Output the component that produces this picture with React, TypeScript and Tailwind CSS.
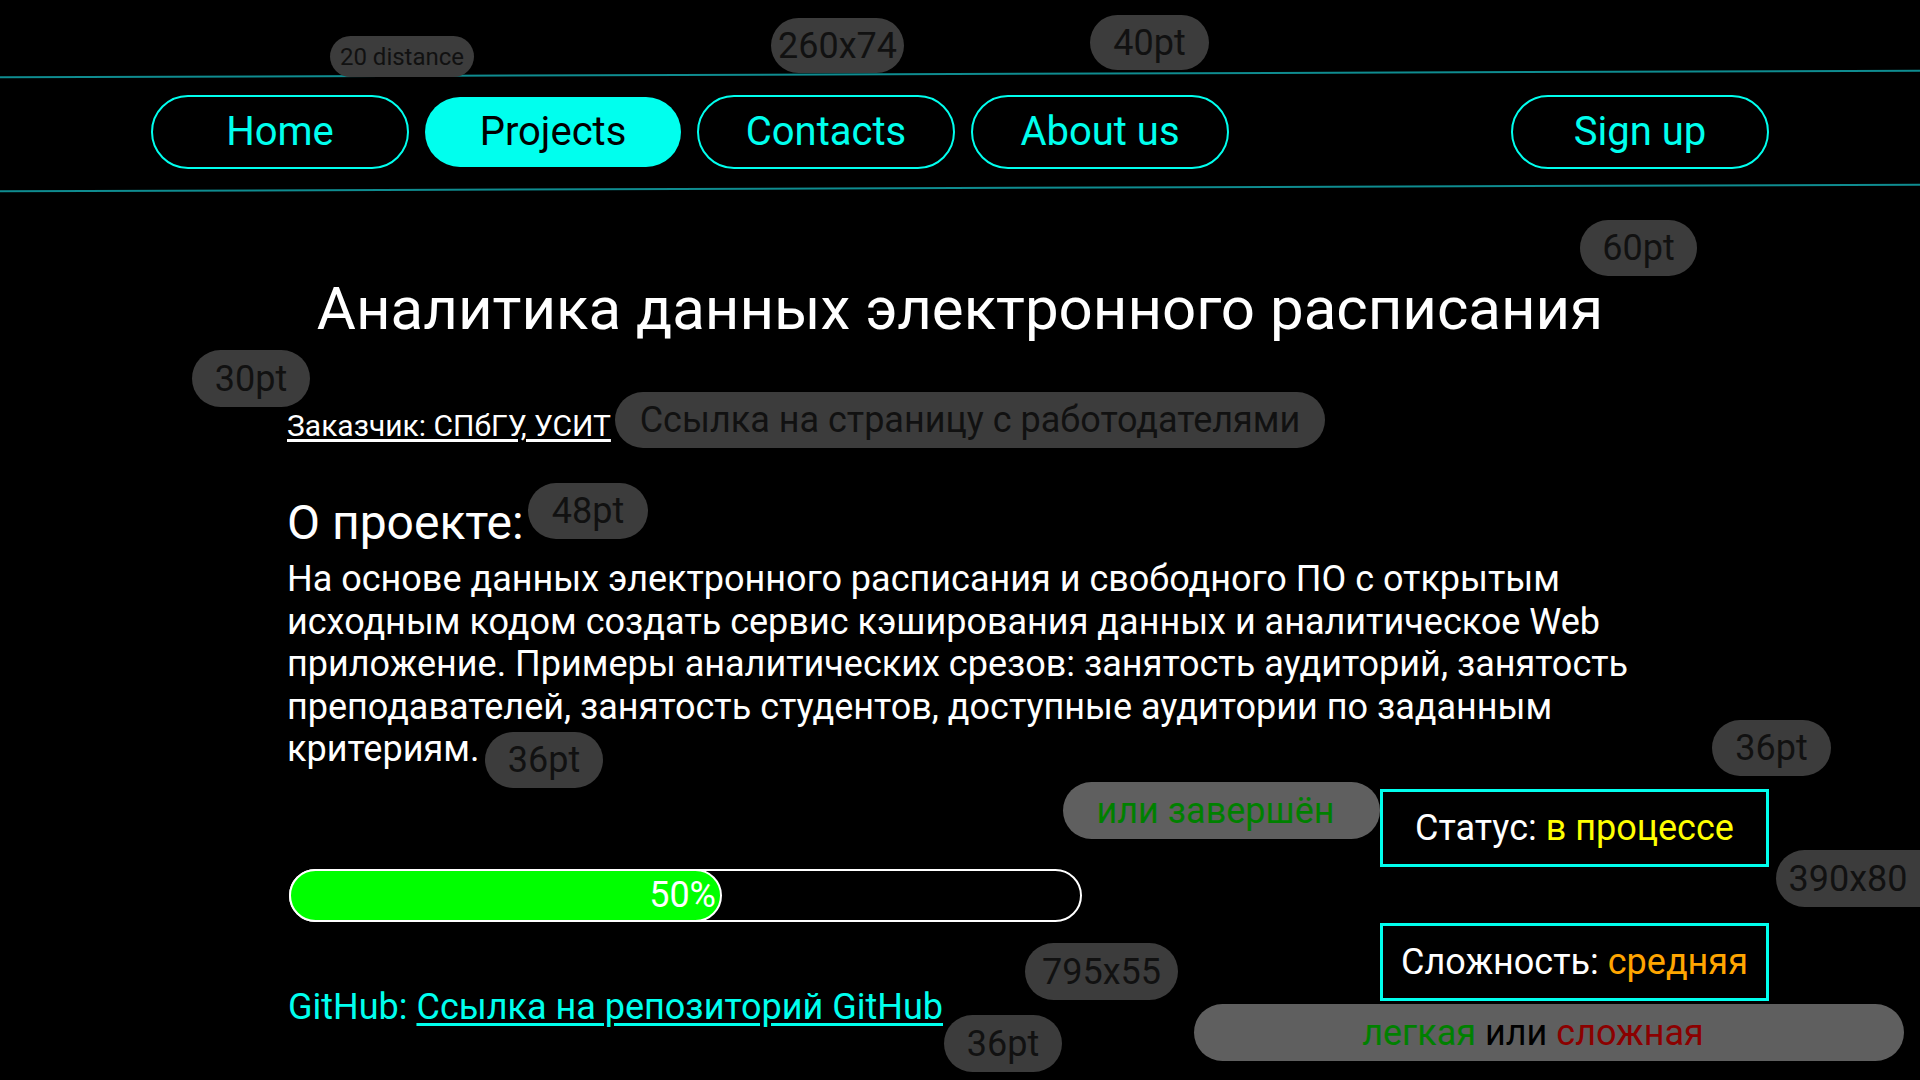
import type { ReactNode } from 'react'

// Annotation bubbles from the design handoff; they float over the layout.
// Size and colour come in through className so nothing conflicts.
function Note({ className, children }: { className: string; children: ReactNode }) {
  return (
    <div
      className={`absolute flex items-center justify-center rounded-full leading-none whitespace-nowrap ${className}`}
    >
      {children}
    </div>
  )
}

function NavButton({ label, active = false }: { label: string; active?: boolean }) {
  if (active) {
    return (
      <button className="flex h-[70px] w-[256px] items-center justify-center rounded-full bg-[#00ffee] text-[40px] text-black">
        {label}
      </button>
    )
  }
  return (
    <button className="flex h-[74px] w-[258px] items-center justify-center rounded-full border-2 border-[#00ffee] text-[40px] text-[#00ffee]">
      {label}
    </button>
  )
}

export default function App() {
  return (
    <div className="relative h-[1080px] w-[1920px] overflow-hidden bg-black font-['Roboto','Noto_Sans',sans-serif] text-white">
      {/* Header: nav between two thin teal rules */}
      <header className="pt-[73px]">
        <div className="h-[2px] -rotate-[0.2deg] bg-[#0f8c90]" />
        <nav className="mt-[20px] flex items-center justify-between px-[151px]">
          <div className="flex items-center gap-[16px]">
            <NavButton label="Home" />
            <NavButton label="Projects" active />
            <NavButton label="Contacts" />
            <NavButton label="About us" />
          </div>
          <NavButton label="Sign up" />
        </nav>
        <div className="mt-[18px] h-[2px] -rotate-[0.2deg] bg-[#0f8c90]" />
      </header>

      <main>
        <h1 className="mt-[85px] text-center text-[60px] leading-[70px] font-normal">
          Аналитика данных электронного расписания
        </h1>

        <div className="pl-[287px]">
          <a className="mt-[64px] inline-block text-[30px] leading-[36px] underline underline-offset-[3px]">
            Заказчик: СПбГУ, УСИТ
          </a>

          <h2 className="mt-[51px] text-[48px] leading-[56px] font-normal">О проекте:</h2>
          <p className="mt-[7px] text-[36px] leading-[42.5px]">
            На основе данных электронного расписания и свободного ПО с открытым
            <br />
            исходным кодом создать сервис кэширования данных и аналитическое Web
            <br />
            приложение. Примеры аналитических срезов: занятость аудиторий, занятость
            <br />
            преподавателей, занятость студентов, доступные аудитории по заданным
            <br />
            критериям.
          </p>
        </div>

        {/* Progress + GitHub on the left, status cards on the right */}
        <div className="mt-[18px] flex justify-between pr-[151px] pl-[289px]">
          <div className="pt-[80px]">
            <div className="flex h-[53px] w-[793px] rounded-full border-2 border-white">
              <div className="-m-[2px] flex h-[53px] w-[433px] items-center justify-end rounded-full border-2 border-white bg-[#00ff00] pr-[4px] text-[36px] text-white">
                50%
              </div>
            </div>
            <p className="mt-[64px] -ml-[1px] text-[36px] leading-[42px] text-[#00ffee]">
              GitHub: <a className="underline underline-offset-[4px]">Ссылка на репозиторий GitHub</a>
            </p>
          </div>

          <div className="flex flex-col gap-[56px]">
            <div className="flex h-[78px] w-[389px] items-center justify-center border-[3px] border-[#00ffee] text-[36px] leading-[42px]">
              <span>
                Статус: <span className="text-[#ffff00]">в процессе</span>
              </span>
            </div>
            <div className="flex h-[78px] w-[389px] items-center justify-center border-[3px] border-[#00ffee] text-[36px] leading-[42px]">
              <span>
                Сложность: <span className="text-[#ffa500]">средняя</span>
              </span>
            </div>
          </div>
        </div>
      </main>

      <Note className="top-[36px] left-[330px] h-[41px] w-[144px] bg-[#3c3c3c] text-[24px] text-[#111]">20 distance</Note>
      <Note className="top-[18px] left-[771px] h-[55px] w-[133px] bg-[#3c3c3c] text-[36px] text-[#111]">260x74</Note>
      <Note className="top-[15px] left-[1090px] h-[55px] w-[119px] bg-[#3c3c3c] text-[36px] text-[#111]">40pt</Note>
      <Note className="top-[220px] left-[1580px] h-[56px] w-[117px] bg-[#3c3c3c] text-[36px] text-[#111]">60pt</Note>
      <Note className="top-[350px] left-[192px] h-[57px] w-[118px] bg-[#3c3c3c] text-[36px] text-[#111]">30pt</Note>
      <Note className="top-[392px] left-[615px] h-[56px] w-[710px] bg-[#3c3c3c] text-[36px] text-[#111]">
        Ссылка на страницу с работодателями
      </Note>
      <Note className="top-[483px] left-[528px] h-[56px] w-[120px] bg-[#3c3c3c] text-[36px] text-[#111]">48pt</Note>
      <Note className="top-[732px] left-[485px] h-[56px] w-[118px] bg-[#3c3c3c] text-[36px] text-[#111]">36pt</Note>
      <Note className="top-[720px] left-[1712px] h-[56px] w-[119px] bg-[#3c3c3c] text-[36px] text-[#111]">36pt</Note>
      <Note className="top-[782px] left-[1063px] h-[57px] w-[317px] bg-[#5f5f5f] pr-[12px] text-[36px] text-[#008000]">
        или завершён
      </Note>
      <Note className="top-[850px] left-[1776px] h-[57px] w-[144px] rounded-r-none bg-[#3c3c3c] text-[36px] text-[#111]">
        390x80
      </Note>
      <Note className="top-[943px] left-[1025px] h-[57px] w-[153px] bg-[#3c3c3c] text-[36px] text-[#111]">795x55</Note>
      <Note className="top-[1015px] left-[944px] h-[57px] w-[118px] bg-[#3c3c3c] text-[36px] text-[#111]">36pt</Note>
      <Note className="top-[1004px] left-[1194px] h-[57px] w-[710px] bg-[#5f5f5f] pr-[32px] text-[36px]">
        <span className="text-[#008000]">легкая</span>
        <span className="whitespace-pre text-black"> или </span>
        <span className="text-[#8b0000]">сложная</span>
      </Note>
    </div>
  )
}
